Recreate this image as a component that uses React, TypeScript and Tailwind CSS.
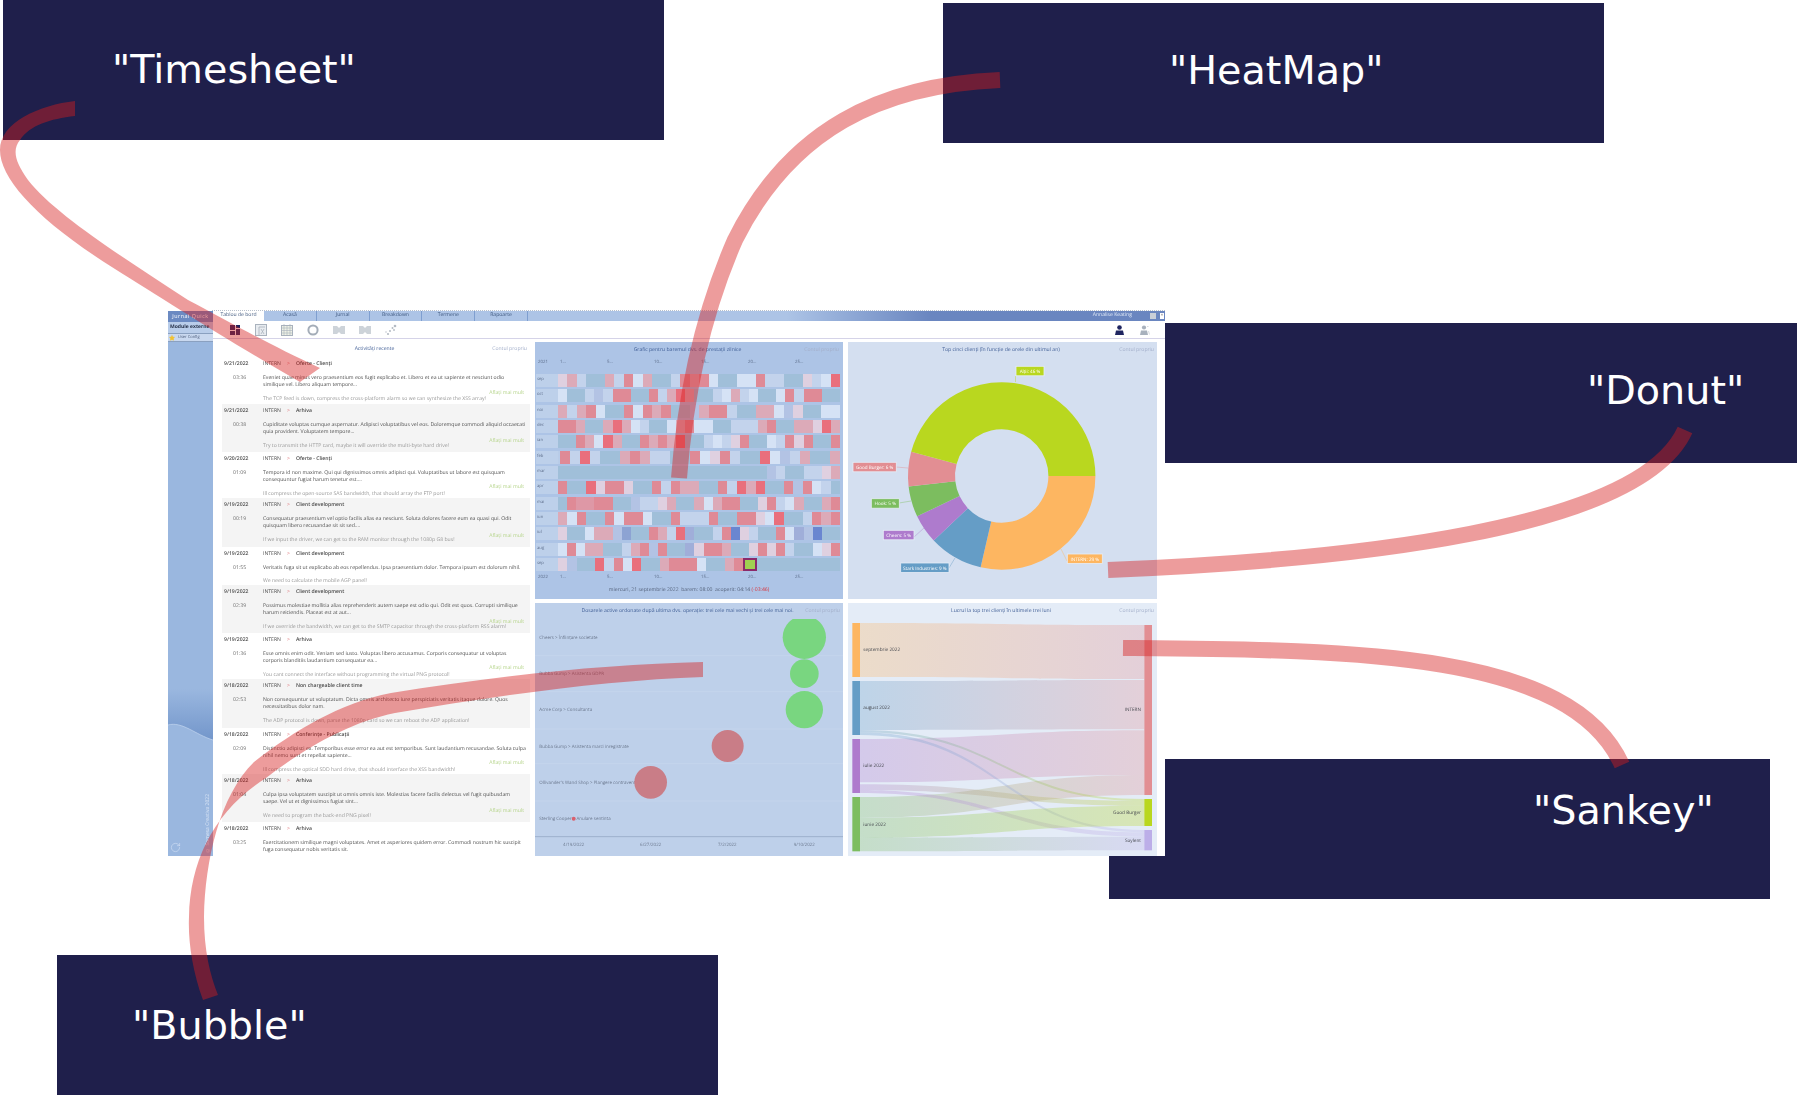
import React from 'react';
import { RotateCw, Star } from 'lucide-react';

// culori heatmap, un cod pe celula
const CELL: Record<string, string> = {
  g: 'bg-[#a0bfd9]',
  a: 'bg-[#d5e2f5]',
  b: 'bg-[#c3d3ec]',
  c: 'bg-[#b3c3e4]',
  C: 'bg-[#a0aed9]',
  D: 'bg-[#8da3d3]',
  E: 'bg-[#6a86d0]',
  p: 'bg-[#dfd0e0]',
  q: 'bg-[#dcaab8]',
  t: 'bg-[#de98a6]',
  r: 'bg-[#df8a96]',
  s: 'bg-[#e96f7c]',
  G: 'bg-[#a0d050] border-2 border-[#8b2a6a]',
};

const HEAT_ROWS = [
  { month: 'sep', cells: 'pqbggqbraqggbrqraggaarbbggpbas' },
  { month: 'oct', cells: 'aggbcbrrggrbqsqggbaqbaggarbrrgg' },
  { month: 'noi', cells: 'qbqraggrarqrggcqrrbggqqacpggaa' },
  { month: 'dec', cells: 'rrqggqsqabggaqraaggbbbqrggqqpsq' },
  { month: 'ian', cells: 'ggrqasqggrqrqsggbabprggabrprggr' },
  { month: 'feb', cells: 'rbsbggqrqbbggraprbggsacbqggq', inset: true },
  { month: 'mar', cells: 'gggggggggggggggggggggggcbggbbpq' },
  { month: 'apr', cells: 'rggsprrpggrbrqqggrbsqsggrcrabg' },
  { month: 'mai', cells: 'grttrrggcbbpqggqaqrrggprbaqggqr' },
  { month: 'iun', cells: 'qarggrarraggrbbbrggrrpasggbrqr' },
  { month: 'iul', cells: 'pggaqqcDggrqbsCggbrEpbggraCcEgg' },
  { month: 'aug', cells: 'araqqggbqrcrggCprrqggprprbggapr' },
  { month: 'sep', cells: 'pcggsbrasggqrrraggqrGggggggggg' },
];

const DAYS = ['1...', '5...', '10...', '15...', '20...', '25...'];

const ACTIVITIES = [
  { h: 'h-[47px]', date: '9/21/2022', time: '03:36', cat: 'Oferte - Clienți', more: true, body: 'Eveniet quae minus vero praesentium eos fugit explicabo et. Libero et ea ut sapiente et nesciunt odio similique vel. Libero aliquam tempore...', note: 'The TCP feed is down, compress the cross-platform alarm so we can synthesize the XSS array!' },
  { h: 'h-[48px]', date: '9/21/2022', time: '00:38', cat: 'Arhiva', more: true, body: 'Cupiditate voluptas cumque aspernatur. Adipisci voluptatibus vel eos. Doloremque commodi aliquid occaecati quia provident. Voluptatem tempore...', note: 'Try to transmit the HTTP card, maybe it will override the multi-byte hard drive!' },
  { h: 'h-[46px]', date: '9/20/2022', time: '01:09', cat: 'Oferte - Clienți', more: true, body: 'Tempora id non maxime. Qui qui dignissimos omnis adipisci qui. Voluptatibus ut labore est quisquam consequuntur fugiat harum tenetur est....', note: 'Ill compress the open-source SAS bandwidth, that should array the FTP port!' },
  { h: 'h-[49px]', date: '9/19/2022', time: '00:19', cat: 'Client development', more: true, body: 'Consequatur praesentium vel optio facilis alias ea nesciunt. Soluta dolores facere eum ea quasi qui. Odit quisquam libero recusandae sit sit sed....', note: 'If we input the driver, we can get to the RAM monitor through the 1080p G8 bus!' },
  { h: 'h-[38px]', date: '9/19/2022', time: '01:55', cat: 'Client development', more: false, body: 'Veritatis fuga sit ut explicabo ab eos repellendus. Ipsa praesentium dolor. Tempora ipsum est dolorum nihil.', note: 'We need to calculate the mobile AGP panel!' },
  { h: 'h-[48px]', date: '9/19/2022', time: '02:39', cat: 'Client development', more: true, body: 'Possimus molestiae mollitia alias reprehenderit autem saepe est odio qui. Odit est quos. Corrupti similique harum reiciendis. Placeat est at aut...', note: 'If we override the bandwidth, we can get to the SMTP capacitor through the cross-platform RSS alarm!' },
  { h: 'h-[46px]', date: '9/19/2022', time: '01:36', cat: 'Arhiva', more: true, body: 'Esse omnis enim odit. Veniam sed iusto. Voluptas libero accusamus. Corporis consequatur ut voluptas corporis blanditiis laudantium consequatur ea...', note: 'You cant connect the interface without programming the virtual PNG protocol!' },
  { h: 'h-[49px]', date: '9/18/2022', time: '02:53', cat: 'Non chargeable client time', more: false, body: 'Non consequuntur ut voluptatum. Dicta omnis architecto iure perspiciatis veritatis itaque dolore. Quos necessitatibus dolor nam.', note: 'The ADP protocol is down, parse the 1080p card so we can reboot the ADP application!' },
  { h: 'h-[46px]', date: '9/18/2022', time: '02:09', cat: 'Conferințe - Publicații', more: true, body: 'Distinctio adipisci ex. Temporibus esse error ea aut est temporibus. Sunt laudantium recusandae. Soluta culpa nihil nemo sunt et repellat sapiente...', note: 'Ill compress the optical SDD hard drive, that should interface the XSS bandwidth!' },
  { h: 'h-[48px]', date: '9/18/2022', time: '01:04', cat: 'Arhiva', more: true, body: 'Culpa ipsa voluptatem suscipit ut omnis omnis iste. Molestias facere facilis delectus vel fugit quibusdam saepe. Vel ut et dignissimos fugiat sint...', note: 'We need to program the back-end PNG pixel!' },
  { h: 'h-[34px]', date: '9/18/2022', time: '03:25', cat: 'Arhiva', more: false, body: 'Exercitationem similique magni voluptates. Amet et asperiores quidem error. Commodi nostrum hic suscipit fuga consequatur nobis veritatis sit.', note: '' },
];

const polar = (cx: number, cy: number, r: number, deg: number) => {
  const a = ((deg - 90) * Math.PI) / 180;
  return [cx + r * Math.cos(a), cy + r * Math.sin(a)];
};

const arcPath = (from: number, to: number) => {
  const cx = 1001.7;
  const cy = 476;
  const R = 93.7;
  const r = 46.7;
  const [x1, y1] = polar(cx, cy, R, from);
  const [x2, y2] = polar(cx, cy, R, to);
  const [x3, y3] = polar(cx, cy, r, to);
  const [x4, y4] = polar(cx, cy, r, from);
  const big = to - from > 180 ? 1 : 0;
  return `M${x1} ${y1}A${R} ${R} 0 ${big} 1 ${x2} ${y2}L${x3} ${y3}A${r} ${r} 0 ${big} 0 ${x4} ${y4}Z`;
};

const SLICES = [
  { from: 90, to: 193, fill: '#fdb661' },
  { from: 193, to: 226.5, fill: '#659dc6' },
  { from: 226.5, to: 244.5, fill: '#ae7bcd' },
  { from: 244.5, to: 263.5, fill: '#7cbd5f' },
  { from: 263.5, to: 285, fill: '#e28e93' },
  { from: 285, to: 450, fill: '#b9d71f' },
];

const LABELS = [
  { x: 1016, y: 366.3, w: 28, text: 'Alții: 46 %', fill: '#b9d71f', line: 'M1015.5 376V382' },
  { x: 853, y: 462.3, w: 43.3, text: 'Good Burger: 6 %', fill: '#e28e93', line: 'M896 467L908 468' },
  { x: 871.3, y: 498.7, w: 28, text: 'Hook: 5 %', fill: '#7cbd5f', line: 'M899 503L911 501' },
  { x: 883.3, y: 530.3, w: 30.7, text: 'Cheers: 5 %', fill: '#ae7bcd', line: 'M914 537L924 528' },
  { x: 900.7, y: 563, w: 48.3, text: 'Stark Industries: 9 %', fill: '#659dc6', line: 'M949 568L955 558' },
  { x: 1067.3, y: 554, w: 35, text: 'INTERN: 29 %', fill: '#fdb661', line: 'M1067 561L1061 549' },
];

const BUBBLES = [
  { cx: 822, cy: 127, r: 65, fill: '#79d680' },
  { cx: 822, cy: 236, r: 43, fill: '#79d680' },
  { cx: 822, cy: 344, r: 56, fill: '#79d680' },
  { cx: 592, cy: 453, r: 48, fill: '#c97d87' },
  { cx: 361, cy: 562, r: 49, fill: '#c97d87' },
  { cx: 130, cy: 671, r: 6, fill: '#d9606e' },
];

const BUBBLE_LABELS = [
  { y: 128, text: 'Cheers > Înființare societate' },
  { y: 236, text: 'Bubba Gump > Asistenta GDPR' },
  { y: 345, text: 'Acme Corp > Consultanta' },
  { y: 454, text: 'Bubba Gump > Asistenta marci inregistrate' },
  { y: 563, text: "Ollivander's Wand Shop > Plangere contraventionala i" },
  { y: 672, text: 'Sterling Cooper > Anulare sentinta' },
];

const AXIS = [
  { x: 130, text: '4/19/2022' },
  { x: 361, text: '6/27/2022' },
  { x: 591, text: '7/2/2022' },
  { x: 822, text: '9/10/2022' },
];

const LINKS = [
  { from: '#fdb661', to: '#e28e93', a: [84, 246], b: [90, 252] },
  { from: '#659dc6', to: '#e28e93', a: [258, 405], b: [255, 403] },
  { from: '#ae7bcd', to: '#e28e93', a: [432, 562], b: [406, 540] },
  { from: '#7cbd5f', to: '#e28e93', a: [606, 668], b: [540, 600] },
  { from: '#659dc6', to: '#b9d71f', a: [405, 412], b: [612, 618] },
  { from: '#659dc6', to: '#bcaee8', a: [412, 420], b: [705, 712] },
  { from: '#ae7bcd', to: '#b9d71f', a: [568, 585], b: [618, 632] },
  { from: '#ae7bcd', to: '#bcaee8', a: [585, 594], b: [712, 725] },
  { from: '#7cbd5f', to: '#b9d71f', a: [668, 728], b: [632, 693] },
  { from: '#7cbd5f', to: '#bcaee8', a: [728, 769], b: [725, 766] },
];

const NODES = [
  { x: 21, y: 84, h: 162, fill: '#fdb661', label: 'septembrie 2022' },
  { x: 21, y: 258, h: 162, fill: '#659dc6', label: 'august 2022' },
  { x: 21, y: 432, h: 162, fill: '#ae7bcd', label: 'iulie 2022' },
  { x: 21, y: 606, h: 163, fill: '#7cbd5f', label: 'iunie 2022' },
  { x: 897, y: 90, h: 510, fill: '#e28e93', label: 'INTERN' },
  { x: 897, y: 612, h: 81, fill: '#b9d71f', label: 'Good Burger' },
  { x: 897, y: 705, h: 61, fill: '#bcaee8', label: 'Soylent' },
];

const TABS = ['Acasă', 'Jurnal', 'Breakdown', 'Termene', 'Rapoarte'];

const PanelHeader = ({ title }: { title: string }) => (
  <div className="grid h-[16px] shrink-0 grid-cols-[1fr_auto_1fr] items-center pr-[3px] pt-[2px] text-[5.1px]">
    <span />
    <span className="whitespace-nowrap text-[#3f5d95]">{title}</span>
    <span className="justify-self-end whitespace-nowrap text-[#a3afca]">Contul propriu</span>
  </div>
);

const ToolIcons = () => (
  <div className="flex h-[16px] items-center gap-[10px] pl-[14px]">
    <svg className="h-[16px] w-[16px]" viewBox="0 0 16 16">
      <path d="M3 3h5v5H3zM9 3h4v3H9zM9 7h4v6H9zM3 9h5v4H3z" fill="#1f2560" />
    </svg>
    <svg className="h-[16px] w-[16px]" viewBox="0 0 16 16" fill="none" stroke="#a9b2bd">
      <rect x="2.5" y="2.5" width="11" height="11" fill="#e8ecf0" />
      <path d="M6 5v8M6 5h6M8 7l3 5M11 7l-3 5" strokeWidth="0.8" />
    </svg>
    <svg className="h-[16px] w-[16px]" viewBox="0 0 16 16" fill="none" stroke="#a9b2bd">
      <rect x="2.5" y="3.5" width="11" height="10" fill="#eef1e6" />
      <path d="M2.5 6h11M2.5 8.5h11M2.5 11h11M5 3.5v10M8 3.5v10M11 3.5v10M5 2v2M11 2v2" strokeWidth="0.6" />
    </svg>
    <svg className="h-[16px] w-[16px]" viewBox="0 0 16 16" fill="none">
      <circle cx="8" cy="8" r="4.6" stroke="#a4adb8" strokeWidth="2" />
    </svg>
    <svg className="h-[16px] w-[16px]" viewBox="0 0 16 16">
      <path d="M2 4h4l2 2 2-2h4v8h-4l-2-2-2 2H2z" fill="#cdd3d9" />
    </svg>
    <svg className="h-[16px] w-[16px]" viewBox="0 0 16 16">
      <path d="M2 4h4l2 2 2-2h4v8h-4l-2-2-2 2H2z" fill="#cdd3d9" />
    </svg>
    <svg className="h-[16px] w-[16px]" viewBox="0 0 16 16" fill="#b4bbc4">
      <circle cx="12" cy="4" r="1.3" />
      <circle cx="9.5" cy="6" r="1" />
      <circle cx="11" cy="8" r="0.9" />
      <circle cx="7" cy="9" r="1" />
      <circle cx="5" cy="12" r="1.1" />
      <circle cx="3" cy="10" r="0.7" />
    </svg>
  </div>
);

const Sidebar = () => (
  <div className="flex w-[45px] shrink-0 flex-col bg-[#9ab7df]">
    <div className="flex h-[11px] items-center justify-center bg-[#6b8ac2] text-[5.4px] tracking-[0.5px] text-white">
      Jurnal Quick
    </div>
    <div className="flex h-[12px] items-center whitespace-nowrap border-b border-[#8aa0c0] bg-[#b9cdea] pl-[2px] text-[5px] font-bold text-[#26324a]">
      Module externe
    </div>
    <div className="flex h-[8px] items-center gap-[3px] border-b border-[#8aa0c0] bg-[#c9d8ef] pl-[1px] text-[4px] text-[#4a5a78]">
      <Star className="h-[6px] w-[6px] fill-[#f2c230] text-[#f2c230]" />
      User Config
    </div>
    <div className="relative flex-1 overflow-hidden">
      <svg className="absolute bottom-0 left-0 h-[167px] w-[45px]" viewBox="0 0 45 167">
        <defs>
          <linearGradient id="waveFill" x1="0" y1="0" x2="0" y2="1">
            <stop offset="0" stopColor="#9ab7df" />
            <stop offset="1" stopColor="#6f93c9" />
          </linearGradient>
        </defs>
        <rect x="0" y="0" width="45" height="56" fill="url(#waveFill)" />
        <path d="M0 36C14 32 28 46 45 51V167H0Z" fill="#9ab7df" />
        <path d="M0 36C14 32 28 46 45 51" fill="none" stroke="#c3d6ef" strokeWidth="0.7" />
      </svg>
      <RotateCw className="absolute bottom-[3px] left-[2px] h-[11px] w-[11px] text-[#d8e4f5]" strokeWidth={1.2} />
      <span className="absolute bottom-[3px] right-[1px] rotate-180 whitespace-nowrap text-[5px] leading-[8px] text-[#dbe6f6] [writing-mode:vertical-rl]">
        © Somesa Creativa 2022
      </span>
    </div>
  </div>
);

const Activities = () => (
  <div className="flex flex-col overflow-hidden bg-white">
    <div className="grid h-[15px] shrink-0 grid-cols-[1fr_auto_1fr] items-center pr-[3px] text-[5.1px]">
      <span />
      <span className="text-[#3f5d95]">Activități recente</span>
      <span className="justify-self-end text-[#a3afca]">Contul propriu</span>
    </div>
    {ACTIVITIES.map((item, i) => (
      <div
        key={i}
        className={`${item.h} flex shrink-0 text-[5.14px] ${i % 2 === 1 ? 'bg-[#f4f4f4]' : 'bg-white'}`}
      >
        <div className="flex w-[41px] shrink-0 flex-col pl-[2px] pt-[3px] text-[#4a4a4a]">
          <span className="h-[8px] font-semibold leading-[8px]">{item.date}</span>
          <span className="mt-[6px] pl-[9px] leading-[8px] text-[#6a6a6a]">{item.time}</span>
        </div>
        <div className="relative flex-1 pr-[4px] pt-[3px]">
          <div className="flex h-[8px] items-center leading-[8px] text-[#4a4a4a]">
            <span className="font-medium">INTERN</span>
            <span className="mx-[6px] text-[#e0777c]">&gt;</span>
            <span className="font-semibold">{item.cat}</span>
          </div>
          <p className="mt-[6px] leading-[7.4px] text-[#505050]">{item.body}</p>
          {item.note && <p className="mt-[6px] leading-[7.4px] whitespace-nowrap text-[#999999]">{item.note}</p>}
          {item.more && (
            <span className="absolute right-[6px] bottom-[8px] leading-[7px] text-[#b5d48a]">Aflați mai mult</span>
          )}
        </div>
      </div>
    ))}
  </div>
);

const HeatMap = () => (
  <div className="flex flex-col bg-[#adc4e6] px-[1px]">
    <PanelHeader title="Grafic pentru baremul dvs. de prestații zilnice" />
    <div className="flex h-[8px] items-center text-[4.4px] text-[#5f708e]">
      <span className="w-[24px] pl-[2px]">2021</span>
      {DAYS.map((d) => (
        <span key={d} className="w-[47.3px]">
          {d}
        </span>
      ))}
    </div>
    <div className="mt-[8px] flex h-[197px] flex-col justify-between pr-[2px]">
      {HEAT_ROWS.map((row, i) => (
        <div key={i} className="flex h-[13px] bg-[#b8cce8]">
          <span className="w-[22px] shrink-0 bg-[#bdd0ea] pl-[1px] pt-[3px] text-[4.2px] leading-[5px] text-[#5f708e]">
            {row.month}
          </span>
          <div className={`flex flex-1 ${row.inset ? 'pl-[2px]' : ''}`}>
            {row.cells.split('').map((c, j) => (
              <span key={j} className={`flex-1 ${CELL[c]}`} />
            ))}
          </div>
        </div>
      ))}
    </div>
    <div className="mt-[2px] flex h-[8px] items-center text-[4.4px] text-[#5f708e]">
      <span className="w-[24px] pl-[2px]">2022</span>
      {DAYS.map((d) => (
        <span key={d} className="w-[47.3px]">
          {d}
        </span>
      ))}
    </div>
    <div className="mt-[5px] whitespace-nowrap text-center text-[5.1px] leading-[8px] text-[#55637c]">
      miercuri, 21 septembrie 2022 &nbsp;barem: 08:00 &nbsp;acoperit: 04:14 <span className="text-[#d8343c]">(-03:46)</span>
    </div>
  </div>
);

const Donut = () => (
  <div className="flex flex-col bg-[#d4dff0]">
    <PanelHeader title="Top cinci clienți (în funcție de orele din ultimul an)" />
    <svg className="h-[241px] w-[309px]" viewBox="848 358 309 241">
      {SLICES.map((s, i) => (
        <path key={i} d={arcPath(s.from, s.to)} fill={s.fill} />
      ))}
      {LABELS.map((l) => (
        <g key={l.text}>
          <path d={l.line} stroke={l.fill} strokeOpacity="0.6" strokeWidth="0.7" fill="none" />
          <rect x={l.x} y={l.y} width={l.w} height="9.5" fill={l.fill} stroke="#e7edf7" strokeWidth="0.8" />
          <text x={l.x + l.w / 2} y={l.y + 6.6} fontSize="4.6" fill="#ffffff" textAnchor="middle">
            {l.text}
          </text>
        </g>
      ))}
    </svg>
  </div>
);

const Bubble = () => (
  <div className="flex flex-col bg-[#bed0ea]">
    <PanelHeader title="Dosarele active ordonate după ultima dvs. operație: trei cele mai vechi și trei cele mai noi." />
    <svg className="h-[237px] w-[308px]" viewBox="14 72 924 711">
      {[182, 290, 402, 506, 618].map((y) => (
        <line key={y} x1="14" x2="938" y1={y} y2={y} stroke="#cbd9ee" strokeWidth="1.5" />
      ))}
      <line x1="14" x2="938" y1="725" y2="725" stroke="#9db0cc" strokeWidth="3" />
      {BUBBLE_LABELS.map((l) => (
        <text key={l.y} x="27" y={l.y + 4} fontSize="13.4" fill="#6d7a90">
          {l.text}
        </text>
      ))}
      {BUBBLES.map((b, i) => (
        <circle key={i} cx={b.cx} cy={b.cy} r={b.r} fill={b.fill} />
      ))}
      {AXIS.map((a) => (
        <text key={a.x} x={a.x} y="753" fontSize="13.4" fill="#6d7a90" textAnchor="middle">
          {a.text}
        </text>
      ))}
    </svg>
  </div>
);

const Sankey = () => (
  <div className="flex flex-col bg-[#e4ecf7]">
    <PanelHeader title="Lucrul la top trei clienți în ultimele trei luni" />
    <svg className="h-[237px] w-[309px]" viewBox="8 72 927 711">
      <defs>
        {LINKS.map((l, i) => (
          <linearGradient key={i} id={`link${i}`} gradientUnits="userSpaceOnUse" x1="44" x2="897" y1="0" y2="0">
            <stop offset="0" stopColor={l.from} />
            <stop offset="1" stopColor={l.to} />
          </linearGradient>
        ))}
      </defs>
      {LINKS.map((l, i) => (
        <path
          key={i}
          d={`M44 ${l.a[0]}C470 ${l.a[0]} 470 ${l.b[0]} 897 ${l.b[0]}L897 ${l.b[1]}C470 ${l.b[1]} 470 ${l.a[1]} 44 ${l.a[1]}Z`}
          fill={`url(#link${i})`}
          fillOpacity="0.3"
        />
      ))}
      {NODES.map((n) => (
        <g key={n.label}>
          <rect x={n.x} y={n.y} width="23" height={n.h} fill={n.fill} />
          <text
            x={n.x < 100 ? 54 : 887}
            y={n.y + n.h / 2 + 4}
            fontSize="14"
            fill="#45484e"
            textAnchor={n.x < 100 ? 'start' : 'end'}
          >
            {n.label}
          </text>
        </g>
      ))}
    </svg>
  </div>
);

const AppWindow = () => (
  <div className="absolute left-[168px] top-[311px] flex h-[545px] w-[997px] overflow-hidden bg-white font-['Open_Sans',sans-serif] blur-[0.35px] [text-rendering:geometricPrecision]">
    <Sidebar />
    <div className="flex min-w-0 flex-1 flex-col">
      <div className="flex h-[10px] shrink-0 text-[5.1px]">
        <div className="flex w-[51px] items-center justify-center text-[#41597f]">Tablou de bord</div>
        <div className="flex flex-1 bg-gradient-to-r from-[#adc4e6] from-[58%] to-[#6a86c0] to-[74%]">
          {TABS.map((t) => (
            <div key={t} className="flex w-[52.8px] items-center justify-center border-r border-[#7f9fd0] text-[#3f587f]">
              {t}
            </div>
          ))}
          <div className="ml-auto flex items-center gap-[4px] pr-[1px] text-[#e4ecf8]">
            <span className="mr-[14px]">Annalise Keating</span>
            <span className="h-[6px] w-[6px] bg-[#c9cfd8]" />
            <span className="flex h-[6px] w-[4px] items-center justify-center bg-white text-[4px] leading-none text-[#333]">×</span>
          </div>
        </div>
      </div>
      <div className="flex h-[18px] shrink-0 items-center justify-between border-b border-[#d5d3e8]">
        <ToolIcons />
        <div className="flex items-center gap-[16px] pr-[15px]">
          <svg className="h-[10px] w-[9px]" viewBox="0 0 9 10" fill="#1f2560">
            <circle cx="4.5" cy="2.5" r="2.3" />
            <path d="M1 5.5h7l1 4.5H0z" />
          </svg>
          <svg className="h-[10px] w-[10px]" viewBox="0 0 10 10" fill="#a8b1bd">
            <circle cx="4" cy="2.5" r="2.1" />
            <path d="M1 5.5h6l1 4.5H0z" />
            <path d="M7 1.5h1.5M8.5 6l1 3.5" stroke="#c5ccd6" strokeWidth="0.7" fill="none" />
          </svg>
        </div>
      </div>
      <div className="grid min-h-0 flex-1 grid-cols-[308px_308px_309px] grid-rows-[257px_253px] gap-x-[5px] gap-y-[4px] pl-[9px] pt-[3px]">
        <div className="row-span-2 flex min-h-0 flex-col">
          <Activities />
        </div>
        <HeatMap />
        <Donut />
        <Bubble />
        <Sankey />
      </div>
    </div>
  </div>
);

const Callout = ({ text, className }: { text: string; className: string }) => (
  <div className={`absolute flex h-[140px] w-[661px] items-center bg-[#1f1f4b] font-['DejaVu_Sans',sans-serif] text-[39.7px] text-white ${className}`}>
    {text}
  </div>
);

export default function App() {
  return (
    <div className="relative h-[1095px] w-[1797px] overflow-hidden bg-white">
      <Callout text={'"Timesheet"'} className="left-[3px] top-0 pl-[109px]" />
      <Callout text={'"HeatMap"'} className="left-[943px] top-[3px] pl-[226px] pb-[4px]" />
      <Callout text={'"Donut"'} className="left-[1136px] top-[323px] pl-[451px] pb-[4px]" />
      <Callout text={'"Sankey"'} className="left-[1109px] top-[759px] pl-[424px] pb-[36px]" />
      <Callout text={'"Bubble"'} className="left-[57px] top-[955px] pl-[75px] pt-[2px]" />
      <AppWindow />
      <div className="absolute left-[212px] top-[310px] w-[953px] border-t border-dotted border-[#b8c0cc]" />
      {/* sagetile peste tot */}
      <svg className="absolute inset-0 h-[1095px] w-[1797px]" viewBox="0 0 1797 1095" fill="none">
        <path
          fill="#d61e1e"
          fillOpacity="0.44"
          d="M75 101C40 105 0 122 0 150C0 180 40 222 115 269C165 300 230 342 300 382L320 368C270 345 235 325 188 300C130 262 55 215 28 180C15 162 12 150 20 140C30 125 50 119 75 116Z"
        />
        <path
          fill="#d61e1e"
          fillOpacity="0.44"
          d="M703 662C610 664 500 675 391 693C340 703 295 730 254 762C220 795 205 860 204 917C204 950 210 975 218 995L203 1000C192 970 188 940 189 917C190 860 215 810 266 778C305 748 350 722 395 713C500 695 610 680 703 677Z"
        />
        <g stroke="#d61e1e" strokeOpacity="0.44" strokeWidth="16">
          <path d="M1000 80C880 85 790 130 735 240C700 320 685 400 679 478" />
          <path d="M1108 570C1350 560 1640 530 1685 430" />
          <path d="M1123 648C1350 650 1570 650 1622 765" />
        </g>
      </svg>
    </div>
  );
}
